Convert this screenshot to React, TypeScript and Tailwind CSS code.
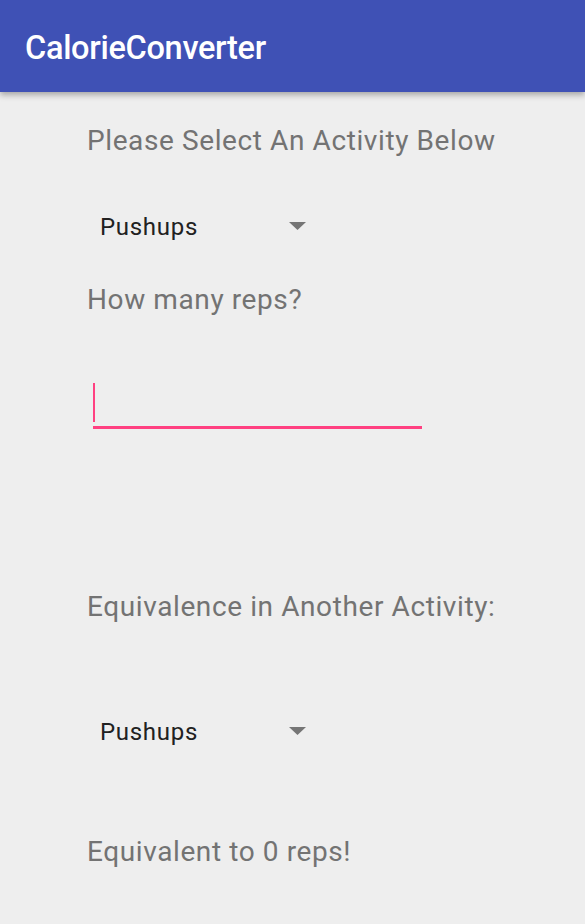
import React from "react";

function Spinner() {
  return (
    <div className="flex items-center h-[28px] pl-[13px]">
      <span className="text-[24px] leading-[28px] tracking-[0.7px] text-[#212121] w-[189px]">Pushups</span>
      <svg width="17" height="8" viewBox="0 0 17 8" className="mt-[-2px]">
        <polygon points="0,0 17,0 8.5,8" fill="#757575" />
      </svg>
    </div>
  );
}

export default function App() {
  return (
    <div className="w-[585px] h-[924px] bg-[#eeeeee] overflow-hidden flex flex-col" style={{ fontFamily: "Roboto, 'Noto Sans', sans-serif" }}>
      <div className="relative z-10 h-[92px] bg-[#3f51b5] flex items-center pl-[25px] shadow-[0_3px_6px_rgba(0,0,0,0.3)] shrink-0">
        <span className="text-white text-[32.5px] tracking-[-0.3px] font-medium leading-[40px] mt-[4px]">CalorieConverter</span>
      </div>
      <div className="flex flex-col pl-[87px] tracking-[0.6px]">
        <div className="mt-[32px] text-[28px] leading-[34px] text-[#737373]">Please Select An Activity Below</div>
        <div className="mt-[55px]"><Spinner /></div>
        <div className="mt-[42px] text-[28px] leading-[34px] text-[#737373]">How many reps?</div>
        <div className="mt-[66px] ml-[6px] w-[329px] h-[46px] flex flex-col">
          <div className="w-[2px] h-[39px] bg-[#ff4081]" />
          <div className="mt-[4px] h-[3px] bg-[#ff4081]" />
        </div>
        <div className="mt-[161px] text-[28px] leading-[34px] text-[#737373]">Equivalence in Another Activity:</div>
        <div className="mt-[94px]"><Spinner /></div>
        <div className="mt-[89px] text-[28px] leading-[34px] text-[#737373]">Equivalent to 0 reps!</div>
      </div>
    </div>
  );
}
